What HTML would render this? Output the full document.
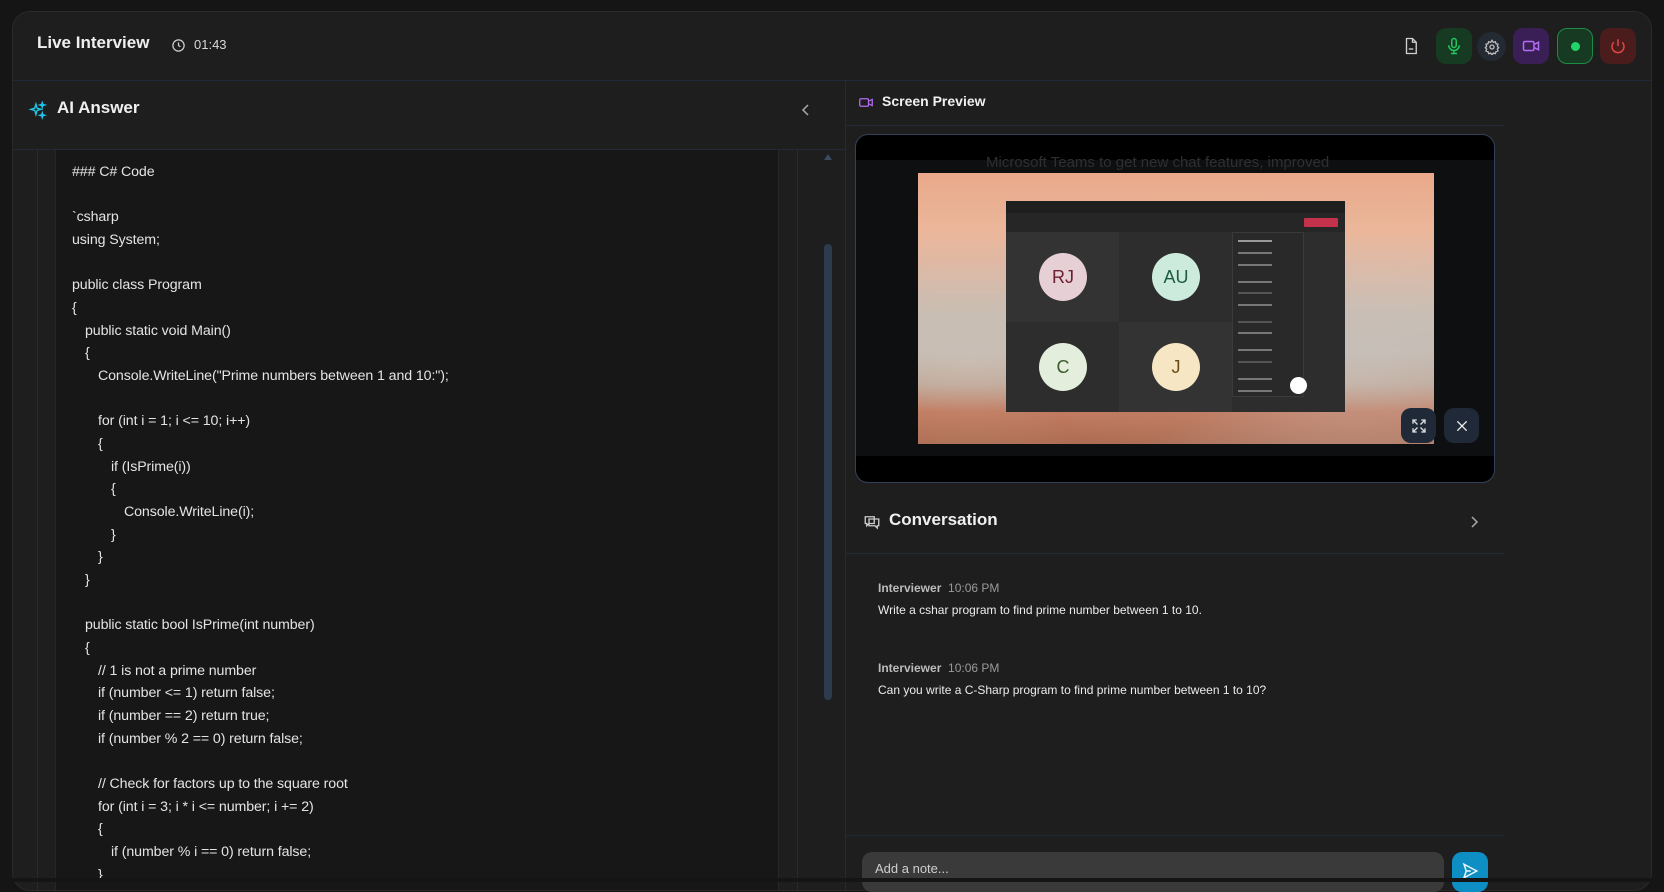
<!DOCTYPE html>
<html><head><meta charset="utf-8"><style>
*{box-sizing:border-box;margin:0;padding:0}
body{width:1664px;height:882px;background:#151515;font-family:"Liberation Sans",sans-serif;color:#e6e6e6;overflow:hidden;position:relative}
.abs{position:absolute}
.frame{left:12px;top:11px;width:1640px;height:880px;background:#1e1e1e;border:1px solid #2a2a2a;border-radius:18px;overflow:hidden}
.hline{height:1px;background:#22293a}
.code{left:55px;top:150px;width:724px;height:740px;background:#171717;border-left:1px solid #262626;border-right:1px solid #262626}
.code div{position:absolute;font-size:14.2px;letter-spacing:-0.1px;color:#e4e4e4;white-space:pre;height:22px;line-height:22px}
.l0{left:16px}.l1{left:29px}.l2{left:42px}.l3{left:55px}.l4{left:68px}
.btn{position:absolute;width:36px;height:36px;border-radius:10px;display:flex;align-items:center;justify-content:center}
.mi{position:absolute;left:5px;height:2px;background:#777;width:34px}
</style></head><body>
<div class="abs frame"></div>
<div class="abs" style="left:37px;top:33px;font-size:17px;font-weight:bold;color:#f0f0f0">Live Interview</div>
<svg class="abs" style="left:171px;top:38px" width="15" height="15" viewBox="0 0 24 24" fill="none" stroke="#cfcfcf" stroke-width="2"><circle cx="12" cy="12" r="9"/><path d="M12 7v5l3 2"/></svg>
<div class="abs" style="left:194px;top:37px;font-size:13px;color:#d8d8d8">01:43</div>
<svg class="abs" style="left:1402px;top:37px" width="18" height="18" viewBox="0 0 24 24" fill="none" stroke="#d0d0d0" stroke-width="1.8"><path d="M6 2h8l5 5v15H6z"/><path d="M14 2v5h5"/><path d="M9 16h6"/></svg>
<div class="btn" style="left:1436px;top:28px;background:#173a22"><svg width="18" height="18" viewBox="0 0 24 24" fill="none" stroke="#22c55e" stroke-width="2"><rect x="9" y="2" width="6" height="12" rx="3"/><path d="M5 11a7 7 0 0014 0M12 18v4M8 22h8"/></svg></div>
<div class="btn" style="left:1477px;top:32px;width:29px;height:29px;border-radius:50%;background:#242a33"><svg width="16" height="16" viewBox="0 0 24 24" fill="none" stroke="#bbb" stroke-width="2"><circle cx="12" cy="12" r="3"/><path d="M12 2l2 3 3-1 1 3 3 1-1 3 2 2-2 2 1 3-3 1-1 3-3-1-2 3-2-3-3 1-1-3-3-1 1-3-2-2 2-2-1-3 3-1 1-3 3 1z"/></svg></div>
<div class="btn" style="left:1513px;top:28px;background:#3a1f56"><svg width="18" height="18" viewBox="0 0 24 24" fill="none" stroke="#b56cf5" stroke-width="2"><rect x="2" y="6" width="14" height="12" rx="2"/><path d="M16 10l6-3v10l-6-3"/></svg></div>
<div class="btn" style="left:1557px;top:28px;background:#173a22;border:1px solid #1f8a44"><div style="width:9px;height:9px;border-radius:50%;background:#22d36a"></div></div>
<div class="btn" style="left:1600px;top:28px;background:#4a1c1c"><svg width="18" height="18" viewBox="0 0 24 24" fill="none" stroke="#e04848" stroke-width="2"><path d="M12 3v9"/><path d="M6.5 7a8 8 0 1011 0"/></svg></div>
<div class="abs hline" style="left:13px;top:80px;width:1639px"></div>
<svg class="abs" style="left:28px;top:101px" width="19" height="19" viewBox="0 0 24 24" fill="none" stroke="#22c3e6" stroke-width="1.8"><path d="M10 4l1.5 5 5 1.5-5 1.5L10 17l-1.5-5-5-1.5 5-1.5z"/><path d="M18 2l.7 2.3L21 5l-2.3.7L18 8l-.7-2.3L15 5l2.3-.7zM18 15l.7 2.3 2.3.7-2.3.7L18 21l-.7-2.3-2.3-.7 2.3-.7z"/></svg>
<div class="abs" style="left:57px;top:98px;font-size:17px;font-weight:bold;color:#f0f0f0">AI Answer</div>
<svg class="abs" style="left:800px;top:103px" width="12" height="14" viewBox="0 0 12 14" fill="none" stroke="#aaa" stroke-width="1.5"><path d="M8 2L3 7l5 5"/></svg>
<div class="abs hline" style="left:13px;top:149px;width:832px"></div>
<div class="abs" style="left:37px;top:150px;width:1px;height:740px;background:#2a2a2a"></div>
<div class="abs code">
<div class="l0" style="top:11px">### C# Code</div>
<div class="l0" style="top:56px">`csharp</div>
<div class="l0" style="top:79px">using System;</div>
<div class="l0" style="top:124px">public class Program</div>
<div class="l0" style="top:147px">{</div>
<div class="l1" style="top:170px">public static void Main()</div>
<div class="l1" style="top:192px">{</div>
<div class="l2" style="top:215px">Console.WriteLine("Prime numbers between 1 and 10:");</div>
<div class="l2" style="top:260px">for (int i = 1; i &lt;= 10; i++)</div>
<div class="l2" style="top:283px">{</div>
<div class="l3" style="top:306px">if (IsPrime(i))</div>
<div class="l3" style="top:328px">{</div>
<div class="l4" style="top:351px">Console.WriteLine(i);</div>
<div class="l3" style="top:374px">}</div>
<div class="l2" style="top:396px">}</div>
<div class="l1" style="top:419px">}</div>
<div class="l1" style="top:464px">public static bool IsPrime(int number)</div>
<div class="l1" style="top:487px">{</div>
<div class="l2" style="top:510px">// 1 is not a prime number</div>
<div class="l2" style="top:532px">if (number &lt;= 1) return false;</div>
<div class="l2" style="top:555px">if (number == 2) return true;</div>
<div class="l2" style="top:578px">if (number % 2 == 0) return false;</div>
<div class="l2" style="top:623px">// Check for factors up to the square root</div>
<div class="l2" style="top:646px">for (int i = 3; i * i &lt;= number; i += 2)</div>
<div class="l2" style="top:668px">{</div>
<div class="l3" style="top:691px">if (number % i == 0) return false;</div>
<div class="l2" style="top:714px">}</div>
</div>
<div class="abs" style="left:797px;top:150px;width:1px;height:740px;background:#2a2a2a"></div>
<div class="abs" style="left:824px;top:154px;width:0;height:0;border-left:4px solid transparent;border-right:4px solid transparent;border-bottom:6px solid #3a4a60"></div>
<div class="abs" style="left:824px;top:244px;width:8px;height:456px;border-radius:4px;background:#2e3b4f"></div>
<div class="abs" style="left:845px;top:81px;width:1px;height:810px;background:#2a2a2a"></div>
<svg class="abs" style="left:858px;top:95px" width="16" height="15" viewBox="0 0 24 24" fill="none" stroke="#b56cf5" stroke-width="2"><rect x="2" y="6" width="14" height="12" rx="2"/><path d="M16 10l6-3v10l-6-3"/></svg>
<div class="abs" style="left:882px;top:93px;font-size:14px;font-weight:bold;color:#f0f0f0">Screen Preview</div>
<div class="abs hline" style="left:846px;top:125px;width:658px"></div>
<div class="abs" style="left:855px;top:134px;width:640px;height:349px;background:#000;border:1px solid #34415a;border-radius:13px;overflow:hidden">
 <div class="abs" style="left:0;top:25px;width:640px;height:296px;background:#0e0f10"></div>
 <div class="abs" style="left:130px;top:19px;font-size:15px;color:#2f2f2f">Microsoft Teams to get new chat features, improved</div>
 <div class="abs" style="left:62px;top:38px;width:516px;height:271px;background:linear-gradient(180deg,#e9a98a 0%,#ebb79b 22%,#d9b8a6 38%,#c4b8ad 52%,#bdb3aa 66%,#b79a88 78%,#bb6444 88%,#a9654a 100%)"></div>
 <div class="abs" style="left:62px;top:38px;width:516px;height:271px;background:radial-gradient(ellipse at 85% 75%,rgba(210,205,200,.55),rgba(0,0,0,0) 50%),radial-gradient(ellipse at 10% 70%,rgba(215,205,195,.5),rgba(0,0,0,0) 40%)"></div>
 <div class="abs" style="left:150px;top:66px;width:339px;height:211px;background:#2d2d2d">
  <div class="abs" style="left:0;top:0;width:339px;height:12px;background:#1f1f1f"></div>
  <div class="abs" style="left:0;top:12px;width:339px;height:19px;background:#262626"></div>
  <div class="abs" style="left:298px;top:17px;width:34px;height:9px;background:#c4314b;border-radius:1px"></div>
  <div class="abs" style="left:0;top:31px;width:113px;height:90px;background:#333"></div>
  <div class="abs" style="left:113px;top:121px;width:113px;height:90px;background:#333"></div>
  <div class="abs" style="left:33px;top:52px;width:48px;height:48px;border-radius:50%;background:#e7cfd6;color:#6b1f2f;font-size:18px;display:flex;align-items:center;justify-content:center">RJ</div>
  <div class="abs" style="left:146px;top:52px;width:48px;height:48px;border-radius:50%;background:#cdebdd;color:#1e5a45;font-size:18px;display:flex;align-items:center;justify-content:center">AU</div>
  <div class="abs" style="left:33px;top:142px;width:48px;height:48px;border-radius:50%;background:#e3efdc;color:#3d5a2a;font-size:18px;display:flex;align-items:center;justify-content:center">C</div>
  <div class="abs" style="left:146px;top:142px;width:48px;height:48px;border-radius:50%;background:#f6e6c4;color:#6a4a10;font-size:18px;display:flex;align-items:center;justify-content:center">J</div>
  <div class="abs" style="left:262px;top:52px;width:24px;height:48px;border-radius:0 24px 24px 0;background:#f2f2f2"></div>
  <div class="abs" style="left:262px;top:142px;width:24px;height:48px;border-radius:0 24px 24px 0;background:#e6eef2"></div>
  <div class="abs" style="left:226px;top:31px;width:72px;height:165px;background:#292929;border:1px solid #3a3a3a">
   <div class="mi" style="top:7px;background:#999"></div><div class="mi" style="top:19px"></div><div class="mi" style="top:31px"></div>
   <div class="mi" style="top:48px"></div><div class="mi" style="top:59px;background:#555"></div><div class="mi" style="top:71px"></div>
   <div class="mi" style="top:88px;background:#555"></div><div class="mi" style="top:99px"></div><div class="mi" style="top:116px"></div>
   <div class="mi" style="top:128px;background:#555"></div><div class="mi" style="top:145px"></div><div class="mi" style="top:157px"></div>
  </div>
  <div class="abs" style="left:284px;top:176px;width:17px;height:17px;border-radius:50%;background:#fff"></div>
 </div>
 <div class="btn" style="left:545px;top:273px;width:35px;height:35px;background:#1f2937"><svg width="18" height="18" viewBox="0 0 24 24" fill="none" stroke="#ddd" stroke-width="1.8"><path d="M4 9V4h5M4 4l6 6M20 9V4h-5M20 4l-6 6M4 15v5h5M4 20l6-6M20 15v5h-5M20 20l-6-6"/></svg></div>
 <div class="btn" style="left:588px;top:273px;width:35px;height:35px;background:#1f2937"><svg width="16" height="16" viewBox="0 0 24 24" fill="none" stroke="#eee" stroke-width="2"><path d="M5 5l14 14M19 5L5 19"/></svg></div>
</div>
<svg class="abs" style="left:863px;top:513px" width="18" height="18" viewBox="0 0 24 24" fill="none" stroke="#ccc" stroke-width="1.8"><path d="M3 5h12v9H8l-3 3v-3H3z"/><path d="M8 8h13v9h-2v3l-3-3H8z"/></svg>
<div class="abs" style="left:889px;top:510px;font-size:17px;font-weight:bold;color:#f0f0f0">Conversation</div>
<svg class="abs" style="left:1468px;top:515px" width="12" height="14" viewBox="0 0 12 14" fill="none" stroke="#aaa" stroke-width="1.5"><path d="M4 2l5 5-5 5"/></svg>
<div class="abs hline" style="left:846px;top:553px;width:658px"></div>
<div class="abs" style="left:878px;top:581px;font-size:12px"><b style="color:#bcbcbc">Interviewer</b>&nbsp; <span style="color:#9a9a9a">10:06 PM</span></div>
<div class="abs" style="left:878px;top:603px;font-size:12px;color:#ececec">Write a cshar program to find prime number between 1 to 10.</div>
<div class="abs" style="left:878px;top:661px;font-size:12px"><b style="color:#bcbcbc">Interviewer</b>&nbsp; <span style="color:#9a9a9a">10:06 PM</span></div>
<div class="abs" style="left:878px;top:683px;font-size:12px;color:#ececec">Can you write a C-Sharp program to find prime number between 1 to 10?</div>
<div class="abs hline" style="left:846px;top:835px;width:658px"></div>
<div class="abs" style="left:862px;top:852px;width:582px;height:40px;background:#3a3a3a;border-radius:10px;padding:9px 13px;font-size:13px;color:#cfcfcf">Add a note...</div>
<div class="abs" style="left:1452px;top:852px;width:36px;height:40px;background:#0e8fc4;border-radius:10px"><svg style="margin:10px 0 0 9px" width="18" height="18" viewBox="0 0 24 24" fill="none" stroke="#e8f7ff" stroke-width="2"><path d="M4 3l17 9-17 9 3-9z"/><path d="M7 12h6"/></svg></div>
<div class="abs" style="left:0;top:878px;width:1664px;height:4px;background:#151515"></div>
</body></html>
